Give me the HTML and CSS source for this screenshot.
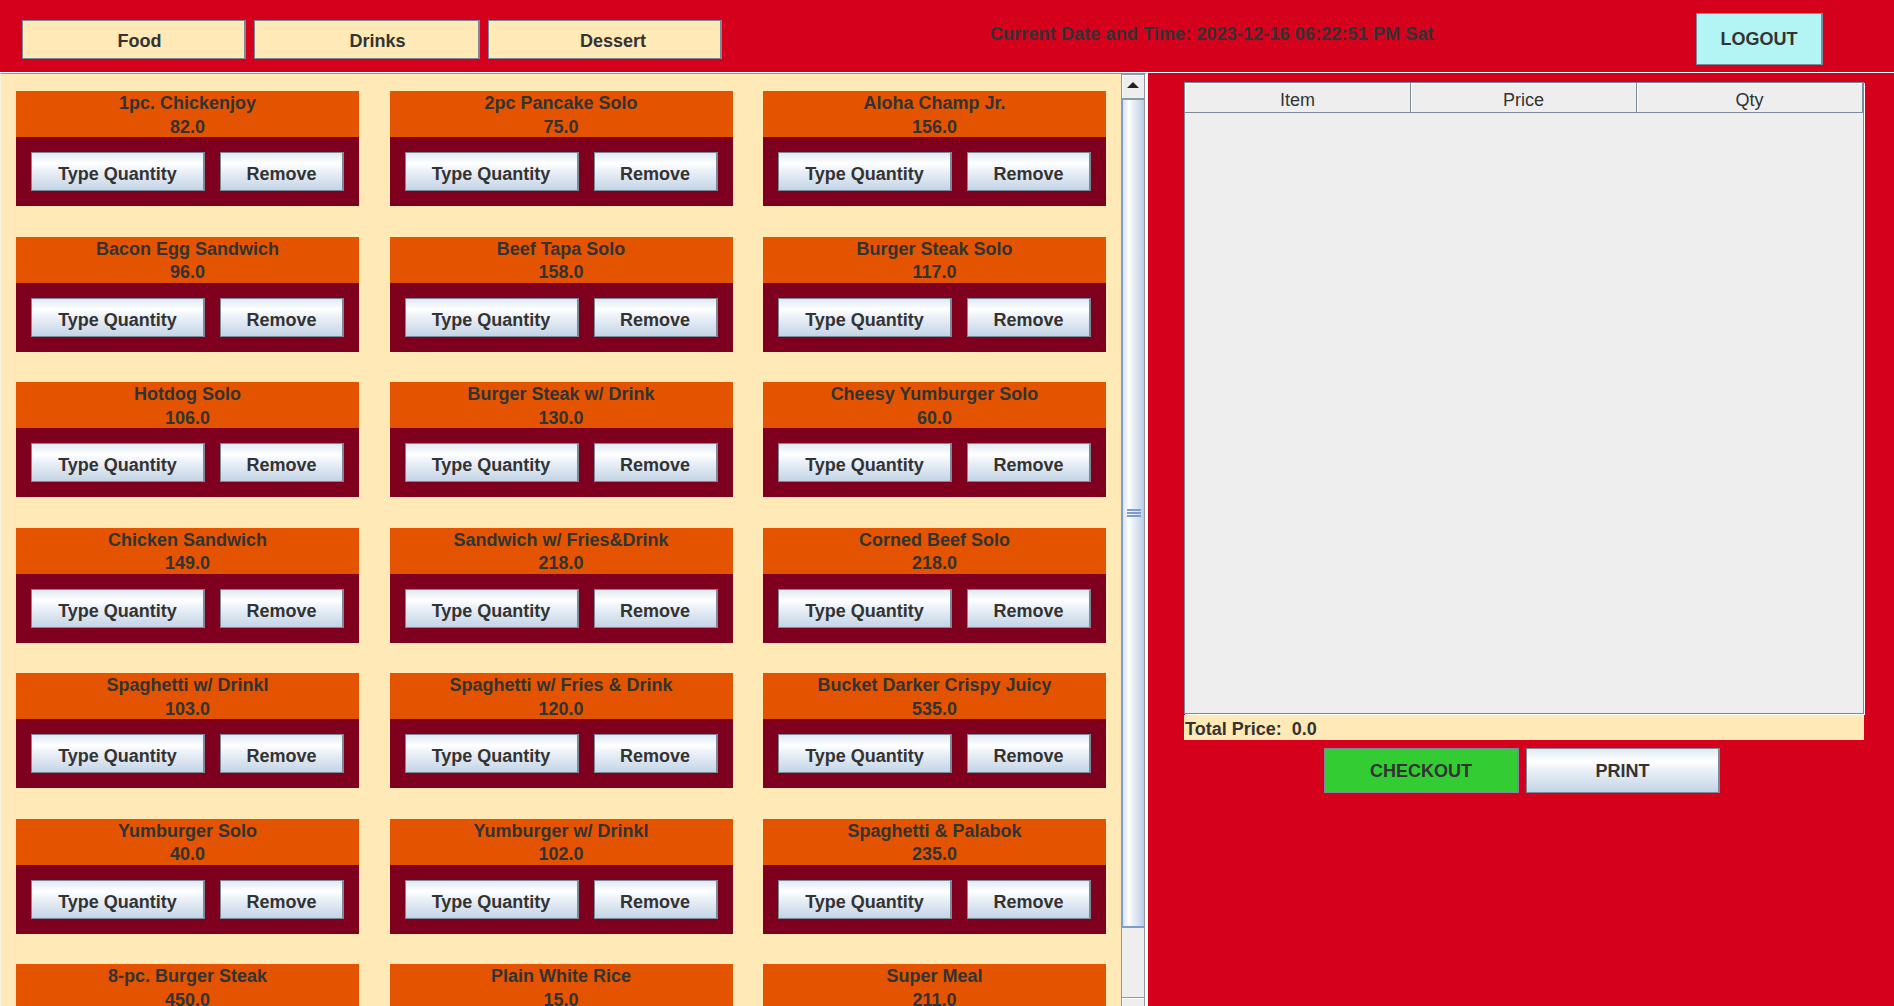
FILE: index.html
```html
<!DOCTYPE html>
<html lang="en">
<head>
<meta charset="utf-8">
<title>POS</title>
<link rel="stylesheet" href="styles.css">
</head>
<body>
<div class="app">
  <header class="topbar">
    <nav class="tabs">
      <button class="tab tab-food">Food</button>
      <button class="tab tab-drinks">Drinks</button>
      <button class="tab tab-dessert">Dessert</button>
    </nav>
    <div class="clock">Current Date and Time: 2023-12-16 06:22:51 PM Sat</div>
    <button class="logout">LOGOUT</button>
  </header>
  <div class="divider"></div>
  <main class="main">
    <section class="menu-pane">
      <div class="viewport">
        <div class="grid">
          <div class="card"><div class="card-head"><div>1pc. Chickenjoy</div><div>82.0</div></div><div class="card-body"><button class="btn btn-qty">Type Quantity</button><button class="btn btn-rm">Remove</button></div></div>
          <div class="card"><div class="card-head"><div>2pc Pancake Solo</div><div>75.0</div></div><div class="card-body"><button class="btn btn-qty">Type Quantity</button><button class="btn btn-rm">Remove</button></div></div>
          <div class="card"><div class="card-head"><div>Aloha Champ Jr.</div><div>156.0</div></div><div class="card-body"><button class="btn btn-qty">Type Quantity</button><button class="btn btn-rm">Remove</button></div></div>

          <div class="card"><div class="card-head"><div>Bacon Egg Sandwich</div><div>96.0</div></div><div class="card-body"><button class="btn btn-qty">Type Quantity</button><button class="btn btn-rm">Remove</button></div></div>
          <div class="card"><div class="card-head"><div>Beef Tapa Solo</div><div>158.0</div></div><div class="card-body"><button class="btn btn-qty">Type Quantity</button><button class="btn btn-rm">Remove</button></div></div>
          <div class="card"><div class="card-head"><div>Burger Steak Solo</div><div>117.0</div></div><div class="card-body"><button class="btn btn-qty">Type Quantity</button><button class="btn btn-rm">Remove</button></div></div>

          <div class="card"><div class="card-head"><div>Hotdog Solo</div><div>106.0</div></div><div class="card-body"><button class="btn btn-qty">Type Quantity</button><button class="btn btn-rm">Remove</button></div></div>
          <div class="card"><div class="card-head"><div>Burger Steak w/ Drink</div><div>130.0</div></div><div class="card-body"><button class="btn btn-qty">Type Quantity</button><button class="btn btn-rm">Remove</button></div></div>
          <div class="card"><div class="card-head"><div>Cheesy Yumburger Solo</div><div>60.0</div></div><div class="card-body"><button class="btn btn-qty">Type Quantity</button><button class="btn btn-rm">Remove</button></div></div>

          <div class="card"><div class="card-head"><div>Chicken Sandwich</div><div>149.0</div></div><div class="card-body"><button class="btn btn-qty">Type Quantity</button><button class="btn btn-rm">Remove</button></div></div>
          <div class="card"><div class="card-head"><div>Sandwich w/ Fries&amp;Drink</div><div>218.0</div></div><div class="card-body"><button class="btn btn-qty">Type Quantity</button><button class="btn btn-rm">Remove</button></div></div>
          <div class="card"><div class="card-head"><div>Corned Beef Solo</div><div>218.0</div></div><div class="card-body"><button class="btn btn-qty">Type Quantity</button><button class="btn btn-rm">Remove</button></div></div>

          <div class="card"><div class="card-head"><div>Spaghetti w/ Drinkl</div><div>103.0</div></div><div class="card-body"><button class="btn btn-qty">Type Quantity</button><button class="btn btn-rm">Remove</button></div></div>
          <div class="card"><div class="card-head"><div>Spaghetti w/ Fries &amp; Drink</div><div>120.0</div></div><div class="card-body"><button class="btn btn-qty">Type Quantity</button><button class="btn btn-rm">Remove</button></div></div>
          <div class="card"><div class="card-head"><div>Bucket Darker Crispy Juicy</div><div>535.0</div></div><div class="card-body"><button class="btn btn-qty">Type Quantity</button><button class="btn btn-rm">Remove</button></div></div>

          <div class="card"><div class="card-head"><div>Yumburger Solo</div><div>40.0</div></div><div class="card-body"><button class="btn btn-qty">Type Quantity</button><button class="btn btn-rm">Remove</button></div></div>
          <div class="card"><div class="card-head"><div>Yumburger w/ Drinkl</div><div>102.0</div></div><div class="card-body"><button class="btn btn-qty">Type Quantity</button><button class="btn btn-rm">Remove</button></div></div>
          <div class="card"><div class="card-head"><div>Spaghetti &amp; Palabok</div><div>235.0</div></div><div class="card-body"><button class="btn btn-qty">Type Quantity</button><button class="btn btn-rm">Remove</button></div></div>

          <div class="card"><div class="card-head"><div>8-pc. Burger Steak</div><div>450.0</div></div><div class="card-body"><button class="btn btn-qty">Type Quantity</button><button class="btn btn-rm">Remove</button></div></div>
          <div class="card"><div class="card-head"><div>Plain White Rice</div><div>15.0</div></div><div class="card-body"><button class="btn btn-qty">Type Quantity</button><button class="btn btn-rm">Remove</button></div></div>
          <div class="card"><div class="card-head"><div>Super Meal</div><div>211.0</div></div><div class="card-body"><button class="btn btn-qty">Type Quantity</button><button class="btn btn-rm">Remove</button></div></div>
        </div>
      </div>
      <div class="vscroll">
        <div class="sb-btn sb-up"><span class="tri-up"></span></div>
        <div class="sb-track">
          <div class="sb-thumb"><span class="grip"></span></div>
        </div>
        <div class="sb-btn sb-down"><span class="tri-down"></span></div>
      </div>
    </section>
    <section class="order-pane">
      <div class="order-table">
        <div class="thead">
          <div class="th">Item</div>
          <div class="th">Price</div>
          <div class="th">Qty</div>
        </div>
      </div>
      <div class="total">Total Price:&nbsp; 0.0</div>
      <div class="actions">
        <button class="checkout">CHECKOUT</button>
        <button class="print">PRINT</button>
      </div>
    </section>
  </main>
</div>
</body>
</html>
```
FILE: styles.css
```css
html, body {
  margin: 0;
  padding: 0;
  overflow: hidden;
}

.app {
  width: 1894px;
  height: 1006px;
  overflow: hidden;
  background: #d5001c;
  font-family: "Liberation Sans", Arial, sans-serif;
  color: #333333;
}

button {
  font-family: "Liberation Sans", Arial, sans-serif;
  font-weight: bold;
  font-size: 18px;
  color: #333333;
  margin: 0;
  box-sizing: border-box;
  cursor: pointer;
}

/* ---------- top bar ---------- */
.topbar {
  height: 72px;
  display: flex;
  align-items: flex-start;
}

.tabs {
  display: flex;
  gap: 8px;
  margin: 20px 0 0 22px;
}

.tab {
  height: 39px;
  background: #ffe9b6;
  border: 1px solid #7a8a99;
  border-right-width: 2px;
  padding: 4px 0 0;
}

.tab-food { width: 224px; padding-left: 12px; }
.tab-drinks { width: 226px; padding-left: 22px; }
.tab-dessert { width: 234px; padding-left: 17px; }

.clock {
  margin: 24px 0 0 268px;
  font-size: 18px;
  font-weight: bold;
  line-height: 20px;
  letter-spacing: 0.12px;
  white-space: nowrap;
}

.logout {
  margin: 13px 71px 0 auto;
  width: 127px;
  height: 52px;
  background: #b3f5f4;
  border: 1px solid #7a8a99;
  border-right-width: 2px;
  padding: 1px 0 0;
}

.divider {
  height: 1px;
  background: #ffffff;
}

/* ---------- main ---------- */
.main {
  display: flex;
  height: 949px;
}

.menu-pane {
  width: 1148px;
  flex: none;
  box-sizing: border-box;
  display: flex;
  border-top: 1px solid #8a99a8;
  border-left: 1px solid #f6f0e2;
  border-right: 3px solid #ffffff;
}

.viewport {
  flex: 1;
  background: #ffe9b6;
  overflow: hidden;
  padding: 17px 0 0 15px;
}

.grid {
  display: grid;
  grid-template-columns: 343px 343px 343px;
  grid-auto-rows: 115px;
  column-gap: 30.5px;
  row-gap: 30.5px;
}

.card {
  display: flex;
  flex-direction: column;
}

.card-head {
  height: 46px;
  box-sizing: border-box;
  background: #e45400;
  padding-top: 1px;
  text-align: center;
  font-weight: bold;
  font-size: 18px;
  line-height: 23.5px;
  white-space: nowrap;
}

.card-body {
  flex: 1;
  background: #7f001e;
  display: flex;
  gap: 15px;
  padding: 15px;
}

.btn {
  height: 39px;
  border: 1px solid #7a8a99;
  border-right-width: 2px;
  padding: 6px 0 0;
  background: linear-gradient(to bottom, #dfe9f4 0%, #ffffff 28%, #eef3f9 45%, #dbe5f0 70%, #c3d4e6 100%);
}

.btn-qty { width: 174px; }
.btn-rm { width: 124px; }

/* ---------- scrollbar ---------- */
.vscroll {
  width: 24px;
  flex: none;
  box-sizing: border-box;
  display: flex;
  flex-direction: column;
  border-right: 1px solid #8a99a8;
  background: #eeeeee;
}

.sb-btn {
  height: 25px;
  flex: none;
  box-sizing: border-box;
  background: #eeeeee;
  border: 1px solid #8a99a8;
  border-right: none;
  box-shadow: inset 1px 1px 0 #ffffff;
  display: flex;
  align-items: center;
  justify-content: center;
}

.sb-up { padding-bottom: 3px; }

.tri-up {
  width: 0;
  height: 0;
  border-left: 6px solid transparent;
  border-right: 6px solid transparent;
  border-bottom: 6px solid #222222;
}

.tri-down {
  width: 0;
  height: 0;
  border-left: 6px solid transparent;
  border-right: 6px solid transparent;
  border-top: 6px solid #222222;
}

.sb-track {
  flex: 1;
  display: flex;
  flex-direction: column;
  border-left: 1px solid #8a99a8;
  background: #eeeeee;
}

.sb-thumb {
  height: 829px;
  box-sizing: border-box;
  margin-left: -1px;
  border-left: 2px solid #7e9cd0;
  border-top: 1px solid #7e9cd0;
  border-bottom: 2px solid #7e9cd0;
  background: linear-gradient(to right, #d5e2f0 0%, #ffffff 28%, #e7eef6 50%, #c9d9ea 85%, #b6cbe0 100%);
  display: flex;
  align-items: center;
  justify-content: center;
}

.grip {
  width: 14px;
  height: 2px;
  background: #7e9cd0;
  box-shadow: 0 3px 0 #7e9cd0, 0 -3px 0 #7e9cd0;
  margin-left: 1px;
}

/* ---------- order pane ---------- */
.order-pane {
  flex: 1;
  display: flex;
  flex-direction: column;
  padding-top: 9px;
}

.order-table {
  margin-left: 36px;
  width: 680px;
  height: 632px;
  box-sizing: border-box;
  border: 1px solid #7a8a99;
  background: #eeeeee;
  box-shadow: 1px 1px 0 #ffffff;
}

.thead {
  display: grid;
  grid-template-columns: 226px 226px 226px;
  height: 30px;
  box-sizing: border-box;
  border-bottom: 1px solid #7a8a99;
}

.th {
  background: #eeeeee;
  border-right: 1px solid #7a8a99;
  box-shadow: inset 1px 1px 0 #ffffff;
  text-align: center;
  font-size: 18px;
  line-height: 20px;
  padding-top: 7px;
  box-sizing: border-box;
}

.total {
  margin: 1px 0 0 36px;
  width: 680px;
  height: 25px;
  box-sizing: border-box;
  background: #ffe9b6;
  padding: 3px 0 0 1px;
  font-size: 18px;
  font-weight: bold;
  line-height: 23px;
  white-space: nowrap;
}

.actions {
  display: flex;
  justify-content: center;
  gap: 7px;
  margin-top: 8px;
  padding-left: 2px;
}

.checkout {
  width: 195px;
  height: 45px;
  background: #33cc33;
  border: 1px solid #7a8a99;
  border-right-width: 2px;
  padding: 2px 0 0;
}

.print {
  width: 194px;
  height: 45px;
  border: 1px solid #7a8a99;
  border-right-width: 2px;
  padding: 2px 0 0;
  background: linear-gradient(to bottom, #dfe9f4 0%, #ffffff 28%, #eef3f9 45%, #dbe5f0 70%, #c3d4e6 100%);
}
```
